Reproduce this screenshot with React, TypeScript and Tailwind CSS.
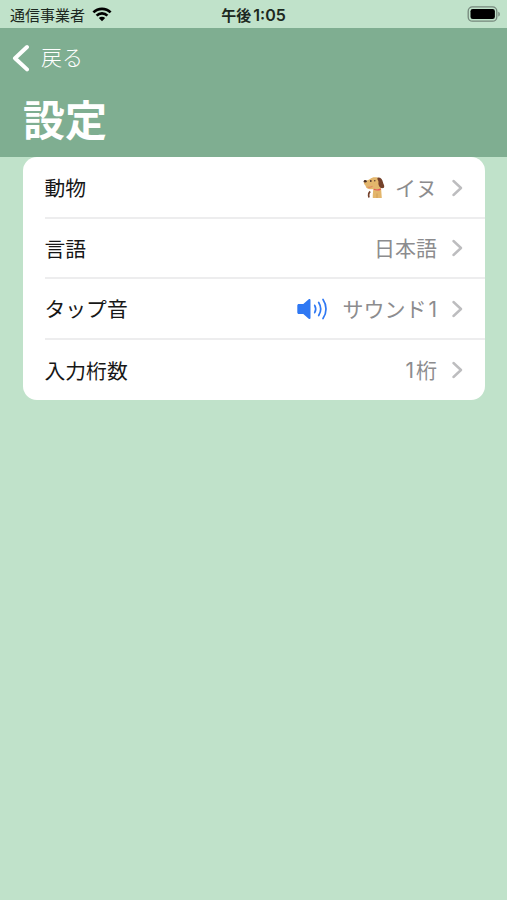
import React from 'react';

type Setting = {
  label: string;
  value: React.ReactNode;
  icon?: React.ReactNode;
};

const DogIcon: React.FC = () => (
  <svg className="mr-[10px] h-[21px] w-[22px]" viewBox="0 0 22 21">
    <path d="M10.500 10h7.500l.8 11h-9c-.2-3 .3-7 .7-11Z" fill="#e3b66c" />
    <path d="M7 2C9 .2 12 0 15 .8l3 3.700-.5 7.500h-6.500c-2.400.6-6 .2-7.400-1-1-.8-.6-2-1.500-2.700C.9 7.400.3 5.200 1.100 3.600 3.400 3.400 5.500 3.400 7 2Z" fill="#e3b66c" />
    <path d="M14.500.7c3-.5 4.700 1.300 5.300 4 .4 2 1.800 3.300 1.400 5.300-.4 1.500-2.800 1.500-4 .4-1.700-1.600-2-3.600-1.700-5.400.2-1.600-1.700-2.600-1-4.300Z" fill="#74412b" />
    <path d="M4.500 10c2 .6 3.600.2 5-.7" fill="none" stroke="#e08a62" strokeWidth="1.200" />
    <path d="M10.800 12.300c2.300.9 5 .8 7-.2" fill="none" stroke="#e2575b" strokeWidth="1.200" />
    <ellipse cx="2.200" cy="4.300" rx="1.500" ry="1.200" fill="#4a3028" />
    <circle cx="7.800" cy="4" r=".9" fill="#4a3028" />
    <circle cx="11.800" cy="3.800" r=".7" fill="#4a3028" />
    <path d="M7.300 14.500c-1.800 1.300-1.900 3.800-1.300 6" fill="none" stroke="#74412b" strokeWidth="1.700" />
    <path d="M14 16.500v4.500" stroke="#c9954f" strokeWidth=".7" />
  </svg>
);

const SpeakerIcon: React.FC = () => (
  <svg className="mr-[14px] h-[22px] w-[31px]" viewBox="0 0 31 22" fill="none">
    <path d="M2 6h4.300L11.700 1.300c.8-.6 1.800-.3 1.800.6v18.200c0 .9-1 1.200-1.800.6L6.300 16H2c-1.200 0-1.700-.6-1.700-1.800V7.800C.3 6.600.8 6 2 6Z" fill="#2f78f3" />
    <path d="M17.700 7.300c1.300 2.300 1.300 5.100 0 7.400M21.700 4.500c2.500 4 2.500 9 0 13M26 1.500c4 5.800 4 13.200 0 19" stroke="#2f78f3" strokeWidth="1.700" strokeLinecap="round" />
  </svg>
);

const settings: Setting[] = [
  { label: '動物', value: 'イヌ', icon: <DogIcon /> },
  { label: '言語', value: '日本語' },
  { label: 'タップ音', value: <>サウンド<span className="pl-[2px]">1</span></>, icon: <SpeakerIcon /> },
  { label: '入力桁数', value: <><span className="pr-[2px]">1</span>桁</> },
];

const StatusBar: React.FC = () => (
  <div className="grid h-7 grid-cols-[1fr_auto_1fr] items-center text-[15px] leading-none text-[#1c2820]">
    <div className="flex items-center gap-[7px] pl-[10px]">
      <span className="pt-[2px]">通信事業者</span>
      <svg className="h-[15px] w-5" viewBox="0 0 20 15">
        <path d="M1.400 5.400a12.300 12.300 0 0 1 17.200 0M4.600 8.600a7.700 7.700 0 0 1 10.800 0" fill="none" stroke="#000" strokeWidth="2.700" />
        <path d="M10 14.300 6.800 11a4.500 4.500 0 0 1 6.400 0Z" fill="#000" />
      </svg>
    </div>
    <div className="flex items-center gap-[2px] font-bold">
      <span className="pt-[2px]">午後</span>
      <span className="pt-[2px] font-['Inter'] text-[16px] font-semibold">1:05</span>
    </div>
    <svg className="mr-[6px] h-4 w-[34px] justify-self-end" viewBox="0 0 34 16">
      <rect x="1.200" y=".9" width="28.600" height="14.300" rx="4.300" fill="none" stroke="#74877b" strokeWidth="1.300" />
      <rect x="3.500" y="3" width="24.400" height="10.100" rx="2.300" fill="#000" />
      <path d="M31.300 5.700c2 .6 2 4.200 0 4.800Z" fill="#74877b" />
    </svg>
  </div>
);

const SettingRow: React.FC<{ item: Setting; last: boolean }> = ({ item, last }) => (
  <li className={`pl-[22px] ${last ? 'h-[60px]' : 'h-[60.67px]'}`}>
    <div className={`flex h-full items-center pt-px pr-[22px] ${last ? '' : 'border-b-2 border-[#ededee]'}`}>
      <span className="-ml-[0.5px] pt-[1.5px] text-[20.8px] text-[#171717]">{item.label}</span>
      <div className="ml-auto flex items-center text-[21px] text-[#8c8c8e]">
        {item.icon}
        <span className="pt-[1.5px]">{item.value}</span>
        <svg className="ml-[15px] h-[18px] w-[11px]" viewBox="0 0 11 18" fill="none">
          <path d="m1.500 2 7.500 7-7.500 7" stroke="#bdbdbf" strokeWidth="2.400" strokeLinecap="round" strokeLinejoin="round" />
        </svg>
      </div>
    </div>
  </li>
);

const App: React.FC = () => {
  return (
    <div className="min-h-screen bg-[#c0e2ca] font-['Inter','Noto_Sans_CJK_JP',sans-serif]">
      <StatusBar />

      {/* Navigation header */}
      <header className="h-[129px] bg-[#7fae91] text-white">
        <button className="flex h-[59px] items-center gap-[12px] pl-[12px] text-[21px] font-light">
          <svg className="h-[28px] w-[17px]" viewBox="0 0 17 28" fill="none">
            <path d="M15 3 3 14.200l12 11.200" stroke="#fff" strokeWidth="4" strokeLinecap="round" strokeLinejoin="round" />
          </svg>
          <span>戻る</span>
        </button>
        <h1 className="pt-[3px] pl-[23px] text-[42px] leading-[62px] font-bold">設定</h1>
      </header>

      <ul className="mr-[22px] ml-[23px] overflow-hidden rounded-[14px] bg-white pt-px">
        {settings.map((item, i) => (
          <SettingRow key={item.label} item={item} last={i === settings.length - 1} />
        ))}
      </ul>
    </div>
  );
};

export default App;
